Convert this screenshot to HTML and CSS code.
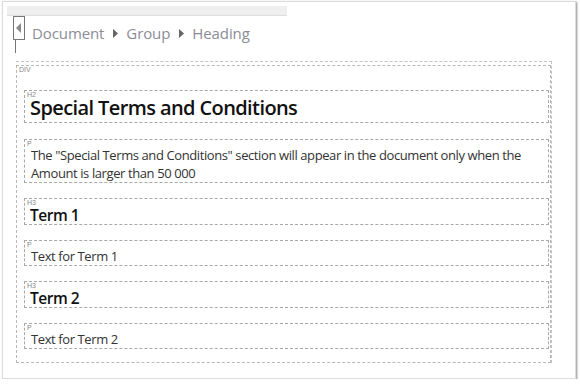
FILE: index.html
```html
<!DOCTYPE html>
<html>
<head>
<meta charset="utf-8">
<link rel="stylesheet" href="styles.css">
</head>
<body>
<div class="window">
  <div class="toolbar"></div>
  <div class="nav">
    <div class="back">
      <svg width="6" height="10" viewBox="0 0 6 10"><path d="M5 0 L0 5 L5 10 Z" fill="#8a8a8a"/></svg>
    </div>
    <div class="crumbs">
      <span class="crumb">Document</span>
      <span class="sep"><svg width="5" height="9" viewBox="0 0 5 9"><path d="M0 0 L5 4.5 L0 9 Z" fill="#666"/></svg></span>
      <span class="crumb">Group</span>
      <span class="sep"><svg width="5" height="9" viewBox="0 0 5 9"><path d="M0 0 L5 4.5 L0 9 Z" fill="#666"/></svg></span>
      <span class="crumb">Heading</span>
    </div>
  </div>
  <div class="stem"></div>
  <div class="editor">
    <div class="block div-block">
      <span class="tag">DIV</span>
      <div class="block h2-block">
        <span class="tag">H2</span>
        <h2 class="h2">Special Terms and Conditions</h2>
      </div>
      <div class="block p-block">
        <span class="tag">P</span>
        <p class="p nowrap">The "Special Terms and Conditions" section will appear in the document only when the<br>Amount is larger than 50 000</p>
      </div>
      <div class="block h3-block">
        <span class="tag">H3</span>
        <h3 class="h3">Term 1</h3>
      </div>
      <div class="block p-block">
        <span class="tag">P</span>
        <p class="p">Text for Term 1</p>
      </div>
      <div class="block h3-block">
        <span class="tag">H3</span>
        <h3 class="h3">Term 2</h3>
      </div>
      <div class="block p-block">
        <span class="tag">P</span>
        <p class="p">Text for Term 2</p>
      </div>
    </div>
  </div>
</div>
</body>
</html>
```
FILE: styles.css
```css
html, body {
  margin: 0;
  padding: 0;
  background: #ffffff;
}
body {
  font-family: "Open Sans", "Liberation Sans", sans-serif;
}
.window {
  margin: 1px 0 0 2px;
  width: 574px;
  height: 378px;
  border: 1px solid #dcdcdc;
  box-shadow: 1px 1px 2px rgba(0, 0, 0, 0.45);
  box-sizing: border-box;
  padding: 4px 0 0 4px;
  background: #fff;
}
.toolbar {
  width: 280px;
  height: 10px;
  background: #efefef;
  border-bottom: 1px solid #dedede;
  box-sizing: border-box;
}
.nav {
  display: flex;
  align-items: center;
  height: 24px;
  margin-left: 6px;
}
.back {
  width: 12px;
  height: 24px;
  box-sizing: border-box;
  border: 1px solid #777;
  display: flex;
  align-items: center;
  justify-content: center;
}
.crumbs {
  display: flex;
  align-items: center;
  margin-left: 7px;
  margin-top: 10px;
}
.crumb {
  font-size: 15px;
  color: #8c8c98;
  letter-spacing: -0.1px;
}
.sep {
  display: flex;
  margin: 0 8px 0 9px;
}
.stem {
  width: 1px;
  height: 13px;
  background: #777;
  margin-left: 8px;
}
.editor {
  margin: 8px 0 0 9px;
  width: 535px;
  border-top: 1px dashed #c4c4c4;
  border-right: 1px dashed #c4c4c4;
  padding-top: 3px;
}
.block {
  position: relative;
  border: 1px dashed #a8a8a8;
}
.div-block {
  border-color: #b8b8b8;
  padding: 24px 0 13px 7px;
  display: flex;
  flex-direction: column;
  gap: 15px;
}
.tag {
  position: absolute;
  left: 2px;
  top: 2px;
  font-family: "Liberation Sans", sans-serif;
  font-size: 7px;
  line-height: 4px;
  color: #888;
}
.h2-block {
  height: 33px;
  box-sizing: border-box;
  margin-right: 1px;
  margin-bottom: 1px;
}
.h2 {
  margin: 0;
  position: absolute;
  left: 5px;
  top: 7px;
  font-size: 20px;
  line-height: 20px;
  font-weight: 600;
  letter-spacing: -0.6px;
  color: #111;
}
.p-block {
  margin-right: 1px;
  padding: 6px 0 0 6px;
}
.p {
  margin: 0;
  font-size: 13px;
  line-height: 18px;
  letter-spacing: -0.4px;
  color: #333;
}
.nowrap {
  white-space: nowrap;
}
.h3-block {
  margin-right: 1px;
  padding: 7px 2px 0 5px;
}
.h3 {
  margin: 0;
  font-size: 15.5px;
  line-height: 18px;
  font-weight: 600;
  letter-spacing: -0.5px;
  color: #111;
}
```
